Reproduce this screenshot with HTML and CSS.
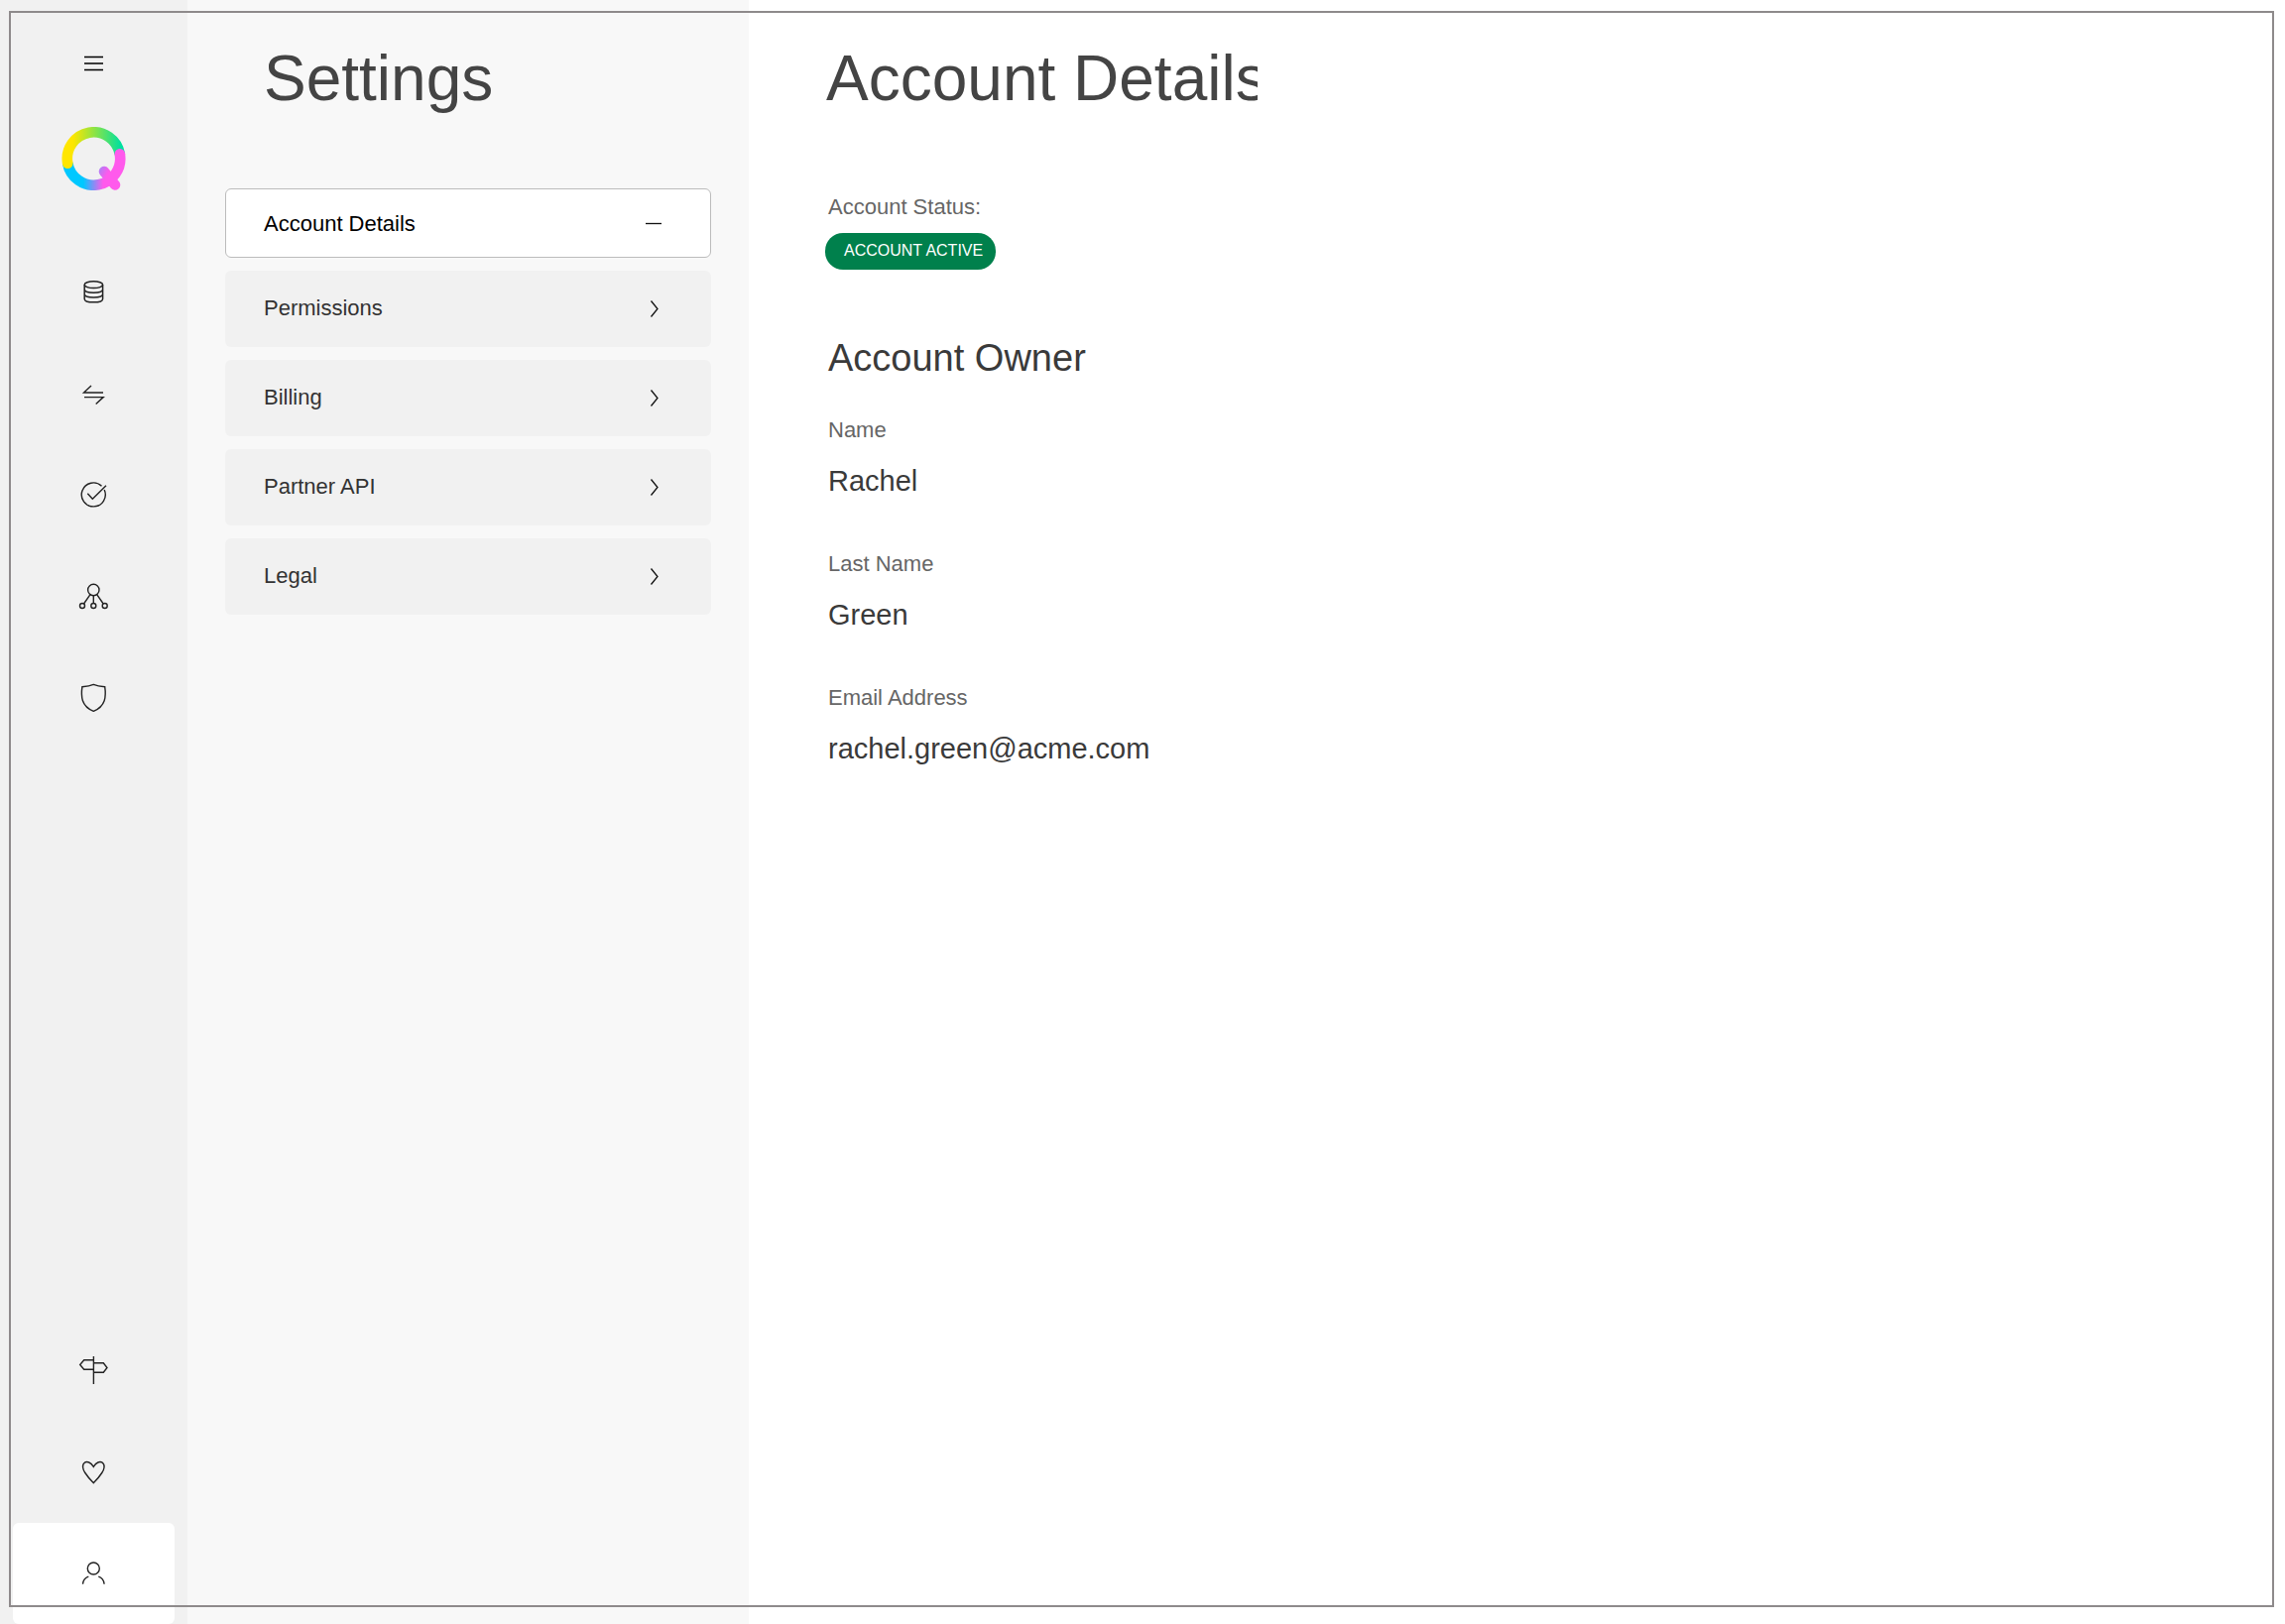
FILE: index.html
```html
<!DOCTYPE html>
<html lang="en">
<head>
<meta charset="utf-8">
<title>Settings – Account Details</title>
<link rel="stylesheet" href="styles.css">
</head>
<body>
<div class="app">
  <nav class="rail" aria-label="Main">
    <button class="rail-item" type="button" aria-label="Menu">
      <svg class="icon" viewBox="0 0 51 50"><path d="M16 18.5h19M16 25h19M16 31.5h19" stroke="#000" stroke-width="1.3"/></svg>
    </button>
    <a class="logo" href="#" aria-label="Home">
      <svg width="65" height="64" viewBox="0 0 65 64" fill="none" stroke-width="10.6">
        <defs>
          <linearGradient id="top" gradientUnits="userSpaceOnUse" x1="8" y1="0" x2="60" y2="0">
            <stop offset="0" stop-color="#ffe600"/><stop offset=".08" stop-color="#fbe600"/><stop offset="1" stop-color="#00e09f"/>
          </linearGradient>
          <linearGradient id="base" gradientUnits="userSpaceOnUse" x1="22" y1="0" x2="42" y2="0">
            <stop offset="0" stop-color="#00c8ff"/><stop offset="1" stop-color="#ff5aec"/>
          </linearGradient>
          <linearGradient id="tail" gradientUnits="userSpaceOnUse" x1="38" y1="44" x2="46" y2="48">
            <stop offset="0" stop-color="#b57cf5"/><stop offset="1" stop-color="#ff5aec"/>
          </linearGradient>
        </defs>
        <path d="M6.2 36.7A26.7 26.7 0 0 1 58.8 27.3" stroke="url(#top)"/>
        <path d="M6.2 36.7A26.7 26.7 0 0 0 58.8 27.3" stroke="url(#base)"/>
        <circle cx="58.8" cy="27.3" r="5.3" fill="#ff5aec" stroke="none"/>
        <circle cx="6.2" cy="36.7" r="5.3" fill="#ffe600" stroke="none"/>
        <path d="M43 45L54 58.5" stroke="url(#tail)" stroke-linecap="round"/>
      </svg>
    </a>
    <div class="rail-group">
      <a class="rail-item" href="#" aria-label="Data">
        <svg class="icon" viewBox="0 0 51 50"><g stroke-width="1.5"><ellipse cx="25.4" cy="17.2" rx="9.2" ry="3.4"/><path d="M16.2 17.2v14.2c0 4.6 18.4 4.6 18.4 0V17.2M16.2 21.8c0 4.6 18.4 4.6 18.4 0M16.2 26.5c0 4.6 18.4 4.6 18.4 0"/></g></svg>
      </a>
      <a class="rail-item" href="#" aria-label="Transfers">
        <svg class="icon" viewBox="0 0 51 50"><path d="M35 24H15.5L23 17M16 28.6h19.2L27.7 35.6"/></svg>
      </a>
      <a class="rail-item" href="#" aria-label="Checks">
        <svg class="icon" viewBox="0 0 51 50"><path d="M33.5 16.2A12 12 0 1 0 36.2 20M19.3 23.7l5 5.6L38 15.7"/></svg>
      </a>
      <a class="rail-item" href="#" aria-label="Network">
        <svg class="icon" viewBox="0 0 51 50"><circle cx="25.3" cy="19" r="5.7"/><circle cx="14" cy="35" r="2.5"/><circle cx="25.3" cy="35" r="2.5"/><circle cx="36.7" cy="35" r="2.5"/><path d="M22 23.7L15.5 33M25.3 24.7v7.8M28.7 23.7l6.5 9.3"/></svg>
      </a>
      <a class="rail-item" href="#" aria-label="Security">
        <svg class="icon" viewBox="0 0 51 50"><path d="M25.3 12.4C22 13.8 18 14.4 13.9 14.7c-1.4 9.500-1 19.500 11.400 24.600 12.400-5.100 12.800-15.100 11.400-24.600-4.100-.3-8.100-.9-11.400-2.300z"/></svg>
      </a>
    </div>
    <div class="rail-group rail-group-end">
      <a class="rail-item" href="#" aria-label="Guides">
        <svg class="icon" viewBox="0 0 51 50"><path d="M25.4 10v28M25.4 13.7h-9.7l-4 4.800 4 4.800h9.700M25.400 16.700h9.900l3.700 4.800-3.700 4.800h-9.900"/></svg>
      </a>
      <a class="rail-item" href="#" aria-label="Favourites">
        <svg class="icon" viewBox="0 0 51 50"><path d="M25.300 19.400C22.500 14.800 18.800 13.700 16.400 15.200 13.200 17.500 14.600 22.300 16.800 25.500 19 28.900 22.500 33 25.300 35.700 28.100 33 31.600 28.900 33.800 25.500 36 22.300 37.400 17.500 34.200 15.200 31.800 13.700 28.100 14.800 25.300 19.400z"/></svg>
      </a>
      <a class="rail-item rail-item-active" href="#" aria-label="Account" aria-current="page">
        <svg class="icon" viewBox="0 0 51 50"><circle cx="25.300" cy="20" r="6"/><path d="M14.500 35.700c.4-3.800 2.700-6.400 5.800-7.500M36.100 35.700c-.4-3.800-2.700-6.400-5.800-7.500"/></svg>
      </a>
    </div>
  </nav>

  <aside class="panel">
    <h1 class="title panel-title">Settings</h1>
    <div class="menu">
      <button class="menu-item menu-item-active" type="button">Account Details
        <svg class="mark" viewBox="0 0 16 18"><path d="M0 8.500h16"/></svg></button>
      <button class="menu-item" type="button">Permissions
        <svg class="mark" viewBox="0 0 16 18"><path d="M4.500 1.500l6.500 8-6.500 8"/></svg></button>
      <button class="menu-item" type="button">Billing
        <svg class="mark" viewBox="0 0 16 18"><path d="M4.500 1.500l6.500 8-6.500 8"/></svg></button>
      <button class="menu-item" type="button">Partner API
        <svg class="mark" viewBox="0 0 16 18"><path d="M4.500 1.500l6.500 8-6.500 8"/></svg></button>
      <button class="menu-item" type="button">Legal
        <svg class="mark" viewBox="0 0 16 18"><path d="M4.500 1.500l6.500 8-6.500 8"/></svg></button>
    </div>
  </aside>

  <main class="content">
    <h2 class="title content-title">Account Details</h2>
    <p class="label status-label">Account Status:</p>
    <span class="badge">ACCOUNT ACTIVE</span>
    <h3 class="subtitle">Account Owner</h3>
    <dl class="fields">
      <div class="field"><dt class="label">Name</dt><dd class="value">Rachel</dd></div>
      <div class="field"><dt class="label">Last Name</dt><dd class="value">Green</dd></div>
      <div class="field"><dt class="label">Email Address</dt><dd class="value">rachel.green@acme.com</dd></div>
    </dl>
  </main>
</div>
<div class="frame"></div>
</body>
</html>
```
FILE: styles.css
```css
* {
  box-sizing: border-box;
}

body {
  margin: 0;
  background: #fff;
  font-family: "Liberation Sans", Arial, Helvetica, sans-serif;
  font-size: 22px;
  line-height: 28px;
  color: #3a3a3a;
}

h1, h2, h3, p, dl, dd {
  margin: 0;
  font-weight: 400;
}

.app {
  display: flex;
  min-height: 100vh;
}

/* Icon rail */
.rail {
  flex: none;
  display: flex;
  flex-direction: column;
  width: 189px;
  padding: 13px 13px 0;
  background: #f1f1f1;
}

.rail-item {
  display: flex;
  align-items: center;
  justify-content: center;
  width: 100%;
  height: 102px;
  padding: 0;
  border: 0;
  border-radius: 6px;
  background: none;
}

.rail-item-active {
  background: #fff;
}

.icon {
  width: 51px;
  height: 50px;
  fill: none;
  stroke: #222;
  stroke-width: 1.4;
}

.logo {
  display: flex;
  justify-content: center;
  margin: 13px 0 52px;
}

.rail-group-end {
  margin-top: auto;
}

/* Settings panel */
.panel {
  flex: none;
  width: 566px;
  padding: 39px 38px;
  background: #f8f8f8;
}

.title {
  font-size: 64px;
  line-height: 80px;
  color: #444;
}

.panel-title {
  padding-left: 39px;
}

.menu {
  display: flex;
  flex-direction: column;
  gap: 13px;
  margin-top: 71px;
}

.menu-item {
  display: flex;
  align-items: center;
  justify-content: space-between;
  height: 77px;
  padding: 0 49px 2px 39px;
  border: 0;
  border-radius: 6px;
  background: #f1f1f1;
  font: inherit;
  color: #333;
}

.menu-item-active {
  height: 70px;
  padding: 2px 49px 0 38px;
  border: 1px solid #bcbcbc;
  background: #fff;
  color: #000;
}

.mark {
  width: 16px;
  height: 18px;
  fill: none;
  stroke: #111;
  stroke-width: 1.3;
}

/* Account details */
.content {
  flex: 1;
  display: flex;
  flex-direction: column;
  align-items: flex-start;
  padding: 39px 80px;
}

.content-title {
  max-width: 435px;
  margin-left: -2px;
  overflow: hidden;
  white-space: nowrap;
}

.label {
  color: #666;
}

.status-label {
  margin: 76px 0 12px;
}

.badge {
  margin-left: -3px;
  padding: 0 13px 2px 19px;
  border-radius: 18px;
  background: #00804c;
  font-size: 16px;
  line-height: 35px;
  color: #fff;
}

.subtitle {
  margin: 65px 0 35px;
  font-size: 38px;
  line-height: 48px;
}

.fields {
  display: grid;
  gap: 52px;
}

.field {
  display: grid;
  gap: 19px;
}

.value {
  font-size: 29px;
  line-height: 36px;
}

/* Outline drawn over the whole window */
.frame {
  position: fixed;
  inset: 11px 11px 17px 9px;
  border: 2px solid #8e8a8b;
  pointer-events: none;
}
```
